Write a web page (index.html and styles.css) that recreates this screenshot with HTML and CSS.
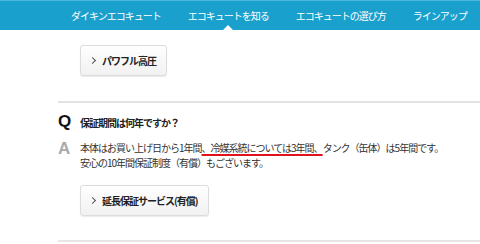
FILE: index.html
```html
<!DOCTYPE html>
<html lang="ja">
<head>
    <meta charset="UTF-8">
    <title>エコキュートを知る</title>
    <link rel="stylesheet" href="styles.css">
</head>
<body>
    <nav class="gnav">
        <a href="#">ダイキンエコキュート</a>
        <a href="#" class="current">エコキュートを知る</a>
        <a href="#">エコキュートの選び方</a>
        <a href="#">ラインアップ</a>
    </nav>
    <div class="content">
        <div class="btn-row">
            <a href="#" class="more-btn">パワフル高圧</a>
        </div>
        <dl class="faq">
            <dt><span class="mark q">Q</span><span class="q-text">保証期間は何年ですか？</span></dt>
            <dd>
                <span class="mark a">A</span>
                <p>本体はお買い上げ日から1年間<span class="mark-red">、冷媒系統については3年間、</span>タンク（缶体）は5年間です。<br>安心の10年間保証制度（有償）もございます。</p>
            </dd>
        </dl>
        <div class="btn-row btn-row2">
            <a href="#" class="more-btn">延長保証サービス(有償)</a>
        </div>
        <hr class="sep">
    </div>
</body>
</html>
```
FILE: styles.css
```css
body {
    margin: 0;
    font-family: "Noto Sans CJK JP", "Liberation Sans", sans-serif;
    font-size: 10px;
    letter-spacing: -1px;
    color: #333;
    background: #fff;
}

.gnav {
    height: 29px;
    border-top: 1px solid #4fb6dc;
    background: #19a0cd;
    display: flex;
    align-items: center;
    padding-left: 71px;
    gap: 27px;
    white-space: nowrap;
    overflow: hidden;
}

.gnav a {
    color: #fff;
    text-decoration: none;
    position: relative;
    line-height: 29px;
}

.gnav a.current:after {
    content: "";
    position: absolute;
    left: 50%;
    bottom: 0;
    margin-left: -5px;
    border-left: 5px solid transparent;
    border-right: 5px solid transparent;
    border-bottom: 5px solid #fff;
}

.content {
    padding-left: 58px;
}

.btn-row {
    padding: 15px 0 0 22px;
}

.more-btn {
    display: inline-block;
    height: 29px;
    line-height: 29px;
    padding: 0 10px 0 21px;
    border: 1px solid #dcdcdc;
    border-radius: 3px;
    background: linear-gradient(#ffffff, #f1f1f1);
    box-shadow: 0 1px 1px rgba(0, 0, 0, 0.08);
    color: #222;
    font-weight: bold;
    text-decoration: none;
    position: relative;
}

.more-btn:before {
    content: "";
    position: absolute;
    left: 9px;
    top: 12px;
    width: 4px;
    height: 4px;
    border-top: 1px solid #555;
    border-right: 1px solid #555;
    transform: rotate(45deg);
}

.faq {
    margin: 25px 0 0 0;
    border-top: 2px solid #e3e3e3;
    padding-top: 10px;
}

.faq dt {
    display: flex;
    align-items: center;
    height: 18px;
}

.faq dd {
    margin: 9px 0 0 0;
    display: flex;
}

.mark {
    width: 22px;
    font-family: "Liberation Sans", sans-serif;
    font-weight: bold;
    font-size: 17px;
    line-height: 18px;
    letter-spacing: 0;
}

.mark.q {
    color: #111;
}

.mark.a {
    color: #aaa;
}

.q-text {
    font-weight: bold;
    color: #222;
}

.faq p {
    margin: 0;
    line-height: 15px;
    color: #333;
}

.mark-red {
    text-decoration: underline;
    text-decoration-color: #e0121e;
    text-decoration-thickness: 2px;
    text-underline-offset: 2px;
}

.btn-row2 {
    padding-top: 15px;
}

.sep {
    margin: 24px 0 0 0;
    border: 0;
    height: 2px;
    background: #e6e6e6;
}
```
